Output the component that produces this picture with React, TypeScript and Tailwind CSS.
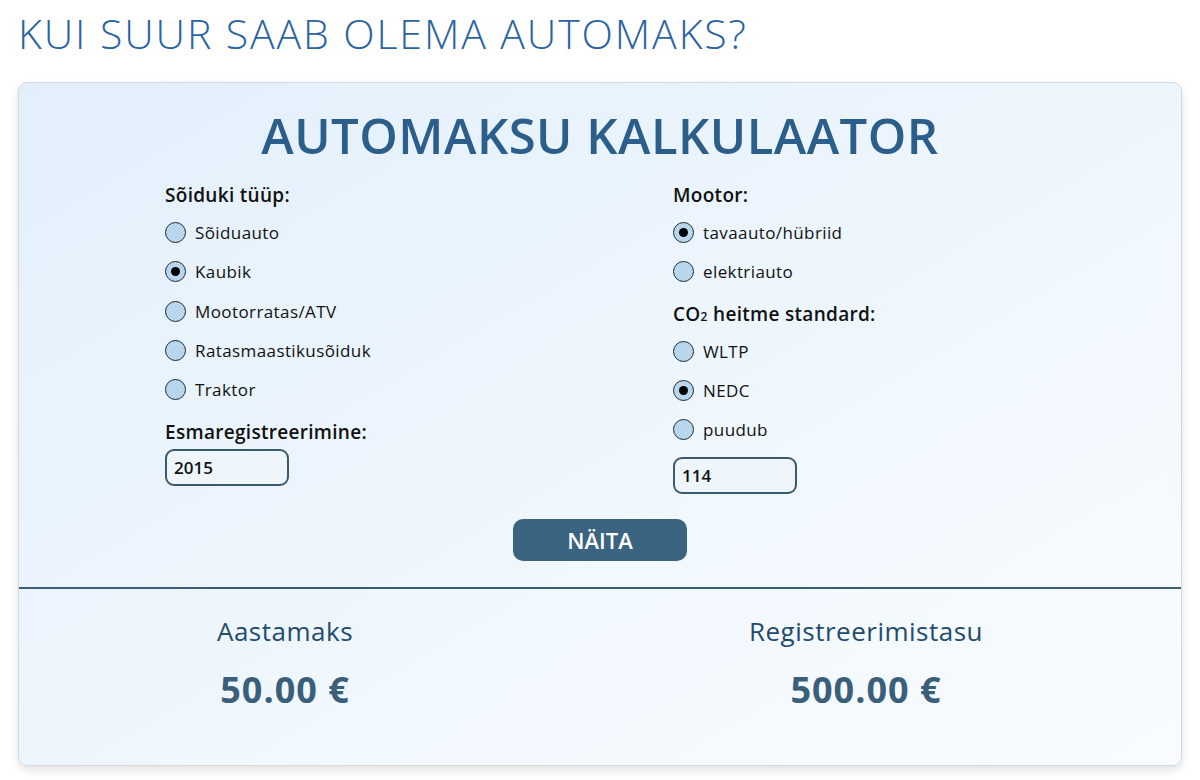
import React from "react";

const font = { fontFamily: "'Open Sans', 'Noto Sans', sans-serif" };

function Radio({ label, checked }: { label: string; checked?: boolean }) {
  return (
    <div className="flex items-center h-[39.3px]">
      <span className="w-[21px] h-[21px] rounded-full border-[1.5px] border-[#1c2a33] bg-[#b8d6ec] flex items-center justify-center shrink-0">
        {checked && <span className="w-[9px] h-[9px] rounded-full bg-black" />}
      </span>
      <span className="ml-[9px] text-[17px] tracking-[0.4px] text-[#111] leading-none">{label}</span>
    </div>
  );
}

function Label({ children, className = "" }: { children: React.ReactNode; className?: string }) {
  return (
    <div className={`text-[19px] tracking-[0.3px] font-semibold text-[#111] h-[35px] flex items-center ${className}`}>
      {children}
    </div>
  );
}

function Input({ value }: { value: string }) {
  return (
    <div className="w-[124px] h-[37px] rounded-[9px] border-2 border-[#3b5a6f] bg-[#eef6fc] flex items-center px-[7px] text-[17px] font-semibold text-[#111]">
      {value}
    </div>
  );
}

export default function App() {
  return (
    <div className="w-[1200px] h-[780px] bg-white overflow-hidden" style={font}>
      <h1 className="pl-[18px] pt-[10px] text-[41px] font-light tracking-[1.9px] text-[#2a63a3] leading-[46px]">
        KUI SUUR SAAB OLEMA AUTOMAKS?
      </h1>
      <div className="mx-[18px] mt-[26px] h-[684px] rounded-[9px] border border-[#d3d9de] shadow-[0_4px_10px_rgba(0,0,0,0.12)] bg-gradient-to-br from-[#e2effb] via-[#eef6fd] to-[#f9fcfe] overflow-hidden">
        <div className="text-center text-[49px] font-semibold tracking-[0.5px] text-[#2b5e8a] leading-[56px] pt-[24px]">
          AUTOMAKSU KALKULAATOR
        </div>
        <div className="flex pl-[146px] pt-[15px]">
          <div className="w-[508px]">
            <Label>Sõiduki tüüp:</Label>
            <Radio label="Sõiduauto" />
            <Radio label="Kaubik" checked />
            <Radio label="Mootorratas/ATV" />
            <Radio label="Ratasmaastikusõiduk" />
            <Radio label="Traktor" />
            <Label className="mt-[5px]">Esmaregistreerimine:</Label>
            <div className="mt-[0px]">
              <Input value="2015" />
            </div>
          </div>
          <div>
            <Label>Mootor:</Label>
            <Radio label="tavaauto/hübriid" checked />
            <Radio label="elektriauto" />
            <Label className="mt-[5px]">
              <span>CO</span>
              <span className="text-[12px] mt-[5px]">2</span>
              <span>&nbsp;heitme standard:</span>
            </Label>
            <Radio label="WLTP" />
            <Radio label="NEDC" checked />
            <Radio label="puudub" />
            <div className="mt-[8px]">
              <Input value="114" />
            </div>
          </div>
        </div>
        <div className="flex justify-center mt-[25px]">
          <div className="w-[174px] h-[42px] rounded-[10px] bg-[#3a6480] text-white text-[22px] font-semibold flex items-center justify-center">
            NÄITA
          </div>
        </div>
        <div className="mt-[26px] h-[2px] bg-[#3a5d78]" />
        <div className="flex pt-[25px]">
          <div className="w-[532px] text-center">
            <div className="text-[26px] tracking-[0.5px] text-[#234b6d] leading-[34px]">Aastamaks</div>
            <div className="text-[36px] font-bold tracking-[1px] text-[#3a5f7a] mt-[20px] leading-[44px]">50.00 €</div>
          </div>
          <div className="w-[630px] text-center">
            <div className="text-[26px] tracking-[0.5px] text-[#234b6d] leading-[34px]">Registreerimistasu</div>
            <div className="text-[36px] font-bold tracking-[1px] text-[#3a5f7a] mt-[20px] leading-[44px]">500.00 €</div>
          </div>
        </div>
      </div>
    </div>
  );
}
